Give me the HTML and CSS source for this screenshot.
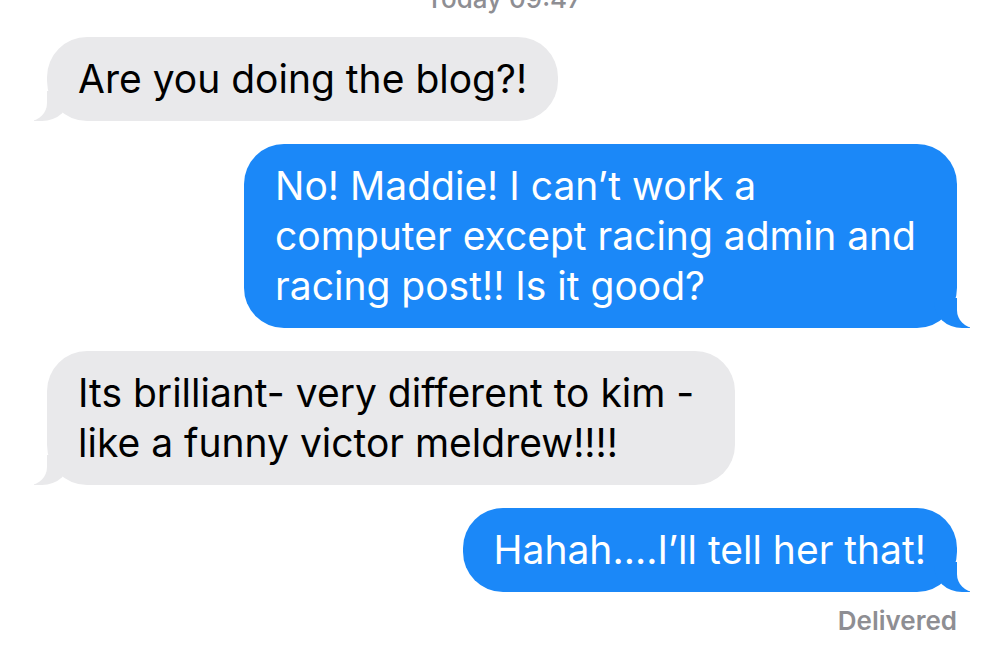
FILE: index.html
```html
<!DOCTYPE html>
<html lang="en">
<head>
  <meta charset="UTF-8">
  <meta name="viewport" content="width=device-width, initial-scale=1.0">
  <title>Messages</title>
  <link rel="stylesheet" href="styles.css">
</head>
<body>
  <!-- Conversation -->
  <div class="thread">
    <div class="stamp">Today 09:47</div>

    <div class="bubble them">Are you doing the blog?!</div>

    <div class="bubble me multi">No! Maddie! I can’t work a<br>computer except racing admin and<br>racing post!! Is it good?</div>

    <div class="bubble them multi">Its brilliant- very different to kim -<br>like a funny victor meldrew!!!!</div>

    <div class="bubble me">Hahah....I’ll tell her that!</div>

    <div class="status">Delivered</div>
  </div>
</body>
</html>
```

FILE: styles.css
```css
/* General Styles */
body {
  margin: 0;
  padding: 0;
  background-color: #fff;
  font-family: 'Inter', 'Liberation Sans', sans-serif;
  overflow: hidden;
}

/* Conversation */
.thread {
  display: flex;
  flex-direction: column;
  padding: 0 43px 0 47px;
}

.stamp {
  margin-top: -16px;
  text-align: center;
  font-size: 26px;
  line-height: 30px;
  font-weight: 500;
  color: #8e8e93;
  padding-left: 4px;
}

/* Bubbles */
.bubble {
  position: relative;
  margin-top: 23px;
  padding: 17px 31px;
  border-radius: 40px;
  font-size: 39px;
  line-height: 50px;
  white-space: nowrap;
}

.bubble.multi {
  padding-right: 41px;
}

.them {
  align-self: flex-start;
  background-color: #e9e9eb;
  color: #000;
}

.me {
  align-self: flex-end;
  background-color: #1b88f8;
  color: #fff;
}

/* Tails */
.bubble::before,
.bubble::after {
  content: "";
  position: absolute;
  bottom: 0;
  height: 30px;
}

.me::before {
  right: -13px;
  width: 36px;
  background-color: #1b88f8;
  border-bottom-left-radius: 28px 26px;
}

.me::after {
  right: -40px;
  width: 40px;
  background-color: #fff;
  border-bottom-left-radius: 18px;
}

.them::before {
  left: -13px;
  width: 36px;
  background-color: #e9e9eb;
  border-bottom-right-radius: 28px 26px;
}

.them::after {
  left: -40px;
  width: 40px;
  background-color: #fff;
  border-bottom-right-radius: 18px;
}

/* Status */
.status {
  align-self: flex-end;
  margin-top: 14px;
  font-size: 26px;
  line-height: 30px;
  font-weight: 600;
  color: #8e8e93;
}
```
